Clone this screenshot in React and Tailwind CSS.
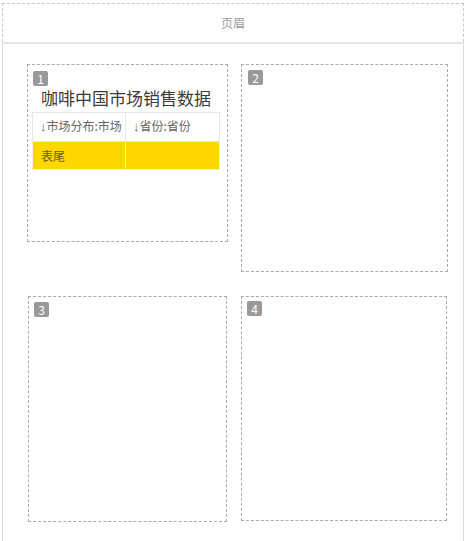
import React from 'react';

const font = { fontFamily: '"Noto Sans CJK SC", "Liberation Sans", sans-serif' };

function Badge({ n }) {
  return (
    <div className="w-[15px] h-[15px] rounded-[2px] bg-[#999] text-white text-[12px] leading-[15px] text-center">
      {n}
    </div>
  );
}

function Arrow() {
  return <span className="font-['Liberation_Sans'] text-[13px]">↓</span>;
}

export default function App() {
  return (
    <div className="w-[467px] h-[541px] bg-white pt-[3px] px-[2px] flex flex-col" style={font}>
      {/* header */}
      <div className="w-[462px] h-[39px] border border-dashed border-b-0 border-[#c8c8c8] flex items-center justify-center text-[12px] text-[#999]">
        页眉
      </div>

      {/* body */}
      <div className="w-[462px] flex-1 border-t-2 border-x border-t-[#e4e4e4] border-x-[#dcdcdc]">
        {/* row 1 */}
        <div className="flex items-start mt-[20px] ml-[24px] gap-[13px]">
          <div className="w-[201px] h-[178px] border border-dashed border-[#aaa] pt-[6px] px-[4px]">
            <div className="pl-[1px]">
              <Badge n="1" />
            </div>
            <div className="text-[17px] leading-[24px] text-[#3a3a3a] text-center pr-[3px]">咖啡中国市场销售数据</div>
            <table className="mt-[2px] w-[188px] border-collapse table-fixed text-[12px]">
              <tbody>
                <tr className="h-[29px]">
                  <td className="w-[93px] border border-[#e6e6e6] pl-[7px] text-[#666] whitespace-nowrap overflow-hidden">
                    <Arrow />市场分布:市场
                  </td>
                  <td className="border border-[#e6e6e6] pl-[7px] text-[#666] whitespace-nowrap">
                    <Arrow />省份:省份
                  </td>
                </tr>
                <tr className="h-[28px] bg-[#ffd700]">
                  <td className="border border-[#eee] pl-[8px] text-[#6b5a1a]">表尾</td>
                  <td className="border border-[#eee]"></td>
                </tr>
              </tbody>
            </table>
          </div>
          <div className="w-[207px] h-[208px] border border-dashed border-[#aaa] pt-[5px] pl-[6px]">
            <Badge n="2" />
          </div>
        </div>

        {/* row 2 */}
        <div className="flex items-start mt-[24px] ml-[25px] gap-[14px]">
          <div className="w-[199px] h-[226px] border border-dashed border-[#aaa] pt-[5px] pl-[5px]">
            <Badge n="3" />
          </div>
          <div className="w-[206px] h-[225px] border border-dashed border-[#aaa] pt-[4px] pl-[5px]">
            <Badge n="4" />
          </div>
        </div>
      </div>
    </div>
  );
}
